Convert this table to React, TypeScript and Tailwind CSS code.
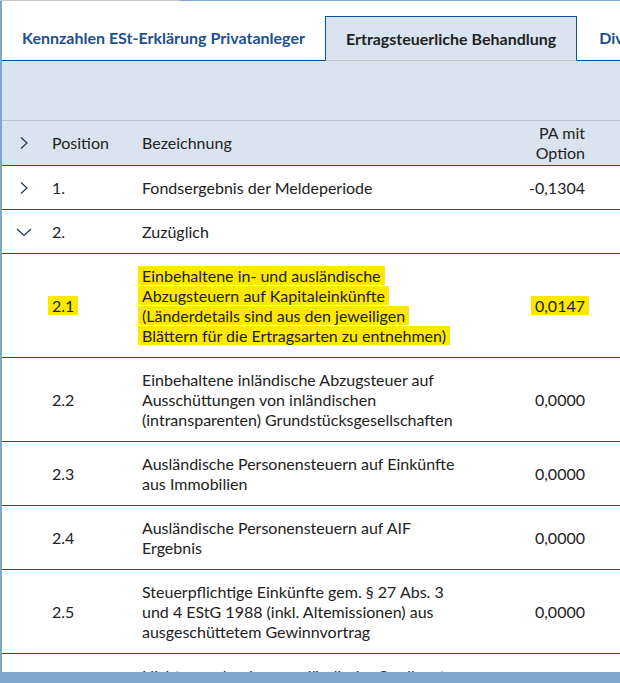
import React from 'react'

type Row = {
  pos: string
  lines: string[]
  value: string
  chevron?: 'right' | 'down'
  marked?: boolean
}

const rows: Row[] = [
  { pos: '1.', lines: ['Fondsergebnis der Meldeperiode'], value: '-0,1304', chevron: 'right' },
  { pos: '2.', lines: ['Zuzüglich'], value: '', chevron: 'down' },
  {
    pos: '2.1',
    lines: [
      'Einbehaltene in- und ausländische',
      'Abzugsteuern auf Kapitaleinkünfte',
      '(Länderdetails sind aus den jeweiligen',
      'Blättern für die Ertragsarten zu entnehmen)',
    ],
    value: '0,0147',
    marked: true,
  },
  {
    pos: '2.2',
    lines: [
      'Einbehaltene inländische Abzugsteuer auf',
      'Ausschüttungen von inländischen',
      '(intransparenten) Grundstücksgesellschaften',
    ],
    value: '0,0000',
  },
  { pos: '2.3', lines: ['Ausländische Personensteuern auf Einkünfte', 'aus Immobilien'], value: '0,0000' },
  { pos: '2.4', lines: ['Ausländische Personensteuern auf AIF', 'Ergebnis'], value: '0,0000' },
  {
    pos: '2.5',
    lines: [
      'Steuerpflichtige Einkünfte gem. § 27 Abs. 3',
      'und 4 EStG 1988 (inkl. Altemissionen) aus',
      'ausgeschüttetem Gewinnvortrag',
    ],
    value: '0,0000',
  },
  {
    pos: '2.6',
    lines: ['Nicht anrechenbare ausländische Quellensteuer', 'auf Wertpapiere'],
    value: '0,0000',
  },
]

const Chevron = ({ dir }: { dir: 'right' | 'down' }) =>
  dir === 'right' ? (
    <svg width="10" height="14" viewBox="0 0 10 14" fill="none" className="text-[#1d2d4d]">
      <path d="M2 1.5 L8 7 L2 12.5" stroke="currentColor" strokeWidth="1.1" />
    </svg>
  ) : (
    <svg width="16" height="10" viewBox="0 0 16 10" fill="none" className="text-[#1d2d4d]">
      <path d="M1 2 L8 8.5 L15 2" stroke="currentColor" strokeWidth="1.1" />
    </svg>
  )

// yellow highlighter marks
const Mark = ({ on, children }: { on?: boolean; children: React.ReactNode }) =>
  on ? <span className="bg-[#fde800] box-decoration-clone px-1 -mx-1">{children}</span> : <>{children}</>

export default function App() {
  return (
    <div
      className="h-[683px] w-[620px] flex flex-col overflow-hidden bg-white text-[16px] leading-5 text-[#222]"
      style={{ fontFamily: 'Lato, "Open Sans", sans-serif' }}
    >
      {/* frame top edge */}
      <div className="flex h-px shrink-0">
        <div className="w-[180px] bg-[#c4c4c4]" />
        <div className="flex-1 bg-[#80a6cc]" />
      </div>

      <div className="flex-1 min-h-0 border-l-2 border-[#80a6cc] overflow-hidden">
        {/* Tabs */}
        <div className="mt-[15px] flex h-[45px] border-b border-[#0b4f9d] whitespace-nowrap">
          <div className="px-5 flex items-center font-bold text-[#1c4f93]">
            Kennzahlen ESt-Erklärung Privatanleger
          </div>
          <div className="px-5 flex items-center font-bold text-[#222] bg-[#d9e4f0] border border-[#0b4f9d] border-b-[#c4c4c4] -mb-px">
            Ertragsteuerliche Behandlung
          </div>
          <div className="pl-[22px] flex items-center font-bold text-[#1c4f93]">Dividenden</div>
        </div>

        {/* blue band */}
        <div className="h-[60px] bg-[#d9e4f0] border-b border-[#b9c3cf]" />

        {/* header */}
        <div className="flex items-center bg-[#d9e4f0] border-b border-[#0b4f9d] py-0.5">
          <div className="w-[50px] pl-[17px] flex items-center">
            <Chevron dir="right" />
          </div>
          <div className="w-[90px]">Position</div>
          <div className="flex-1">Bezeichnung</div>
          <div className="w-[120px] pr-[35px] text-right">
            PA mit
            <br />
            Option
          </div>
        </div>

        {rows.map((r) => (
          <div key={r.pos} className="flex items-center border-b border-[#0b4f9d] pt-3 pb-[11px]">
            <div className="w-[50px] pl-[17px] flex items-center">
              {r.chevron === 'right' && <Chevron dir="right" />}
              {r.chevron === 'down' && (
                <span className="-ml-[3px] flex">
                  <Chevron dir="down" />
                </span>
              )}
            </div>
            <div className="w-[90px]">
              <Mark on={r.marked}>{r.pos}</Mark>
            </div>
            <div className="flex-1">
              {r.lines.map((l) => (
                <div key={l} className="whitespace-nowrap">
                  <Mark on={r.marked}>{l}</Mark>
                </div>
              ))}
            </div>
            <div className="w-[120px] pr-[35px] text-right">
              <Mark on={r.marked}>{r.value}</Mark>
            </div>
          </div>
        ))}
      </div>

      {/* frame bottom edge */}
      <div className="h-[11px] shrink-0 bg-[#80a6cc]" />
    </div>
  )
}
